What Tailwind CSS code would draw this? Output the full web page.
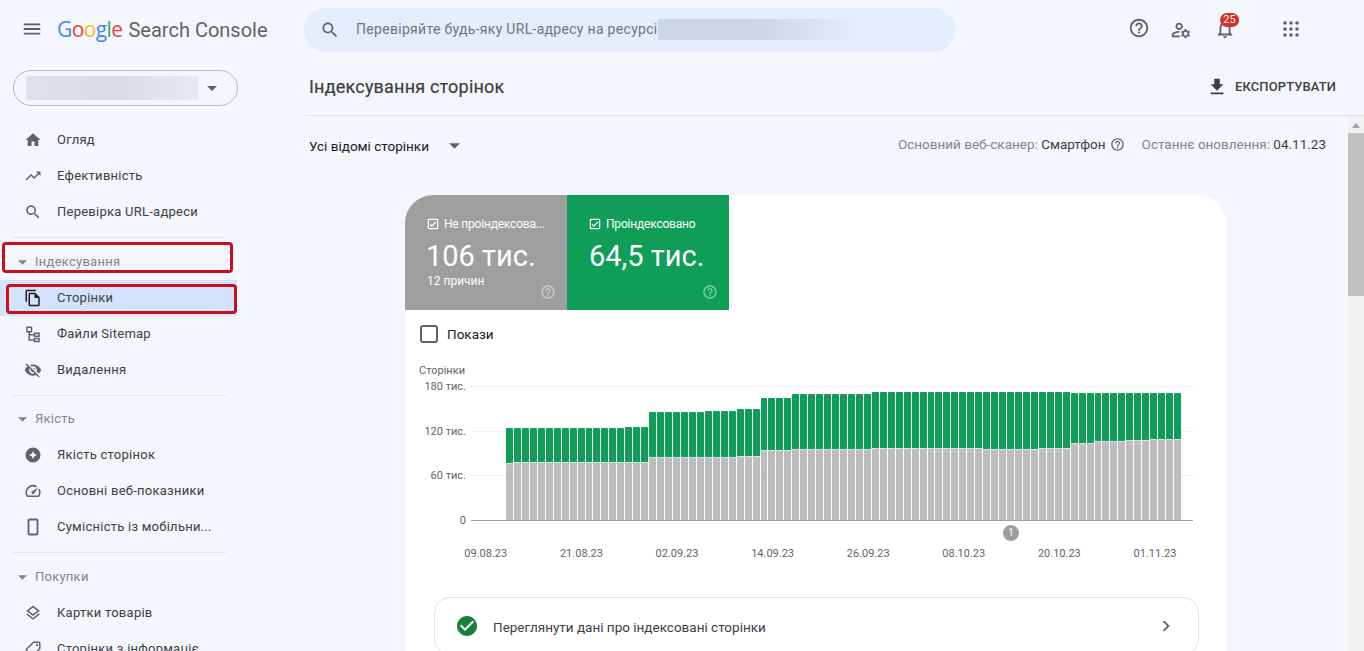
<!DOCTYPE html>
<html lang="uk">
<head>
  <meta charset="UTF-8" />
  <meta name="viewport" content="width=device-width, initial-scale=1.0" />
  <title>Індексування сторінок</title>
  <script src="https://cdn.jsdelivr.net/npm/@tailwindcss/browser@4"></script>
</head>
<body class="bg-[#f3f6fc] h-screen overflow-hidden font-['Roboto',sans-serif] text-[#3c4043]">

  <!-- header -->
  <header class="flex items-center h-[58px]">
    <div class="w-[304px] shrink-0 flex items-center">
      <svg class="ml-[21px] w-[22px] h-[22px] fill-[#5f6368]" viewBox="0 0 24 24"><path d="M3 18h18v-2H3v2zm0-5h18v-2H3v2zm0-7v2h18V6H3z"/></svg>
      <div class="ml-[14px] mt-[2px] flex items-baseline whitespace-nowrap">
        <span class="text-[21px] leading-[28px] font-['Open_Sans',sans-serif] tracking-[-0.6px]"><span class="text-[#4285f4]">G</span><span class="text-[#ea4335]">o</span><span class="text-[#fbbc05]">o</span><span class="text-[#4285f4]">g</span><span class="text-[#34a853]">l</span><span class="text-[#ea4335]">e</span></span>
        <span class="ml-[6px] text-[20px] text-[#5f6368]">Search Console</span>
      </div>
    </div>
    <div class="w-[651px] h-[44px] mt-[1px] rounded-full bg-[#e3edfb] flex items-center">
      <svg class="ml-[16px] w-5 h-5 fill-[#5f6368]" viewBox="0 0 24 24"><path d="M15.5 14h-.79l-.28-.27C15.41 12.59 16 11.11 16 9.5 16 5.91 13.09 3 9.5 3S3 5.91 3 9.5 5.91 16 9.5 16c1.61 0 3.09-.59 4.23-1.57l.27.28v.79l5 4.99L20.49 19l-4.99-5zm-6 0C7.01 14 5 11.99 5 9.5S7.01 5 9.5 5 14 7.01 14 9.5 11.99 14 9.5 14z"/></svg>
      <span class="ml-[16px] text-[14px] tracking-[0.3px] text-[#70757a] whitespace-nowrap">Перевіряйте будь-яку URL-адресу на ресурсі</span>
      <div class="w-[200px] h-[21px] bg-gradient-to-r from-[#cdd6e5] via-[#ccd6e6] to-[#e3edfb]"></div>
    </div>
    <div class="flex-1 relative flex items-center h-full">
      <svg class="absolute left-[173px] top-[17px] w-[22px] h-[22px] fill-[#5f6368]" viewBox="0 0 24 24"><path d="M11 18h2v-2h-2v2zm1-16C6.48 2 2 6.48 2 12s4.48 10 10 10 10-4.48 10-10S17.52 2 12 2zm0 18c-4.41 0-8-3.59-8-8s3.59-8 8-8 8 3.59 8 8-3.59 8-8 8zm0-14c-2.21 0-4 1.79-4 4h2c0-1.1.9-2 2-2s2 .9 2 2c0 2-3 1.75-3 5h2c0-2.25 3-2.5 3-5 0-2.21-1.79-4-4-4z"/></svg>
      <svg class="absolute left-[215px] top-[19px] w-[22px] h-[22px] fill-[#5f6368]" viewBox="0 0 24 24"><path d="M4 18v-.65c0-.34.16-.66.41-.81C6.1 15.53 8.03 15 10 15c.03 0 .05 0 .08.01.1-.7.3-1.37.59-1.98-.22-.02-.44-.03-.67-.03-2.42 0-4.68.67-6.61 1.82-.88.52-1.39 1.5-1.39 2.53V20h9.26c-.42-.6-.75-1.28-.97-2H4zM10 12c2.21 0 4-1.79 4-4s-1.79-4-4-4-4 1.79-4 4 1.79 4 4 4zm0-6c1.1 0 2 .9 2 2s-.9 2-2 2-2-.9-2-2 .9-2 2-2zM20.75 16c0-.22-.03-.42-.06-.63l1.14-1.01-1-1.73-1.45.49c-.32-.27-.68-.48-1.08-.63L18 11h-2l-.3 1.49c-.4.15-.76.36-1.08.63l-1.45-.49-1 1.73 1.14 1.01c-.03.21-.06.41-.06.63s.03.42.06.63l-1.14 1.01 1 1.73 1.45-.49c.32.27.68.48 1.08.63L16 21h2l.3-1.49c.4-.15.76-.36 1.08-.63l1.45.49 1-1.73-1.14-1.01c.03-.21.06-.41.06-.63zM17 18c-1.1 0-2-.9-2-2s.9-2 2-2 2 .9 2 2-.9 2-2 2z"/></svg>
      <svg class="absolute left-[259px] top-[18px] w-[22px] h-[22px] fill-[#5f6368]" viewBox="0 0 24 24"><path d="M12 22c1.1 0 2-.9 2-2h-4c0 1.1.9 2 2 2zm6-6v-5c0-3.07-1.63-5.64-4.5-6.32V4c0-.83-.67-1.5-1.5-1.5s-1.5.67-1.5 1.5v.68C7.64 5.36 6 7.92 6 11v5l-2 2v1h16v-1l-2-2zm-2 1H8v-6c0-2.48 1.51-4.5 4-4.5s4 2.02 4 4.5v6z"/></svg>
      <span class="absolute left-[265px] top-[13px] w-[19px] h-[14px] rounded-full bg-[#d93025] text-white text-[11px] leading-[14px] text-center">25</span>
      <svg class="absolute left-[328px] top-[21px] w-[16px] h-[16px] fill-[#5f6368]" viewBox="0 0 16 16"><circle cx="2" cy="2" r="1.8"/><circle cx="8" cy="2" r="1.8"/><circle cx="14" cy="2" r="1.8"/><circle cx="2" cy="8" r="1.8"/><circle cx="8" cy="8" r="1.8"/><circle cx="14" cy="8" r="1.8"/><circle cx="2" cy="14" r="1.8"/><circle cx="8" cy="14" r="1.8"/><circle cx="14" cy="14" r="1.8"/></svg>
    </div>
  </header>

  <div class="flex h-[593px]">
    <!-- sidebar -->
    <aside class="w-[305px] shrink-0 relative">
      <div class="ml-[13px] mt-[12px] w-[225px] h-[36px] rounded-full border border-[#b4b8bf] flex items-center">
        <div class="ml-[12px] w-[172px] h-[24px] bg-gradient-to-r from-[#dfe2e8] via-[#d8dbe1] to-[#e6e9ef]"></div>
        <svg class="ml-[9px] w-[10px] h-[5px] fill-[#5f6368]" viewBox="0 0 10 5"><path d="M0 0l5 5 5-5z"/></svg>
      </div>

      <nav class="mt-[16px] w-[237px] text-[13px] tracking-[0.25px]">
        <a class="flex items-center h-[36px]">
          <svg class="ml-[24px] w-[18px] h-[18px] fill-[#5f6368]" viewBox="0 0 24 24"><path d="M10 20v-6h4v6h5v-8h3L12 3 2 12h3v8z"/></svg>
          <span class="ml-[15px]">Огляд</span>
        </a>
        <a class="flex items-center h-[36px]">
          <svg class="ml-[24px] w-[18px] h-[18px] fill-[#5f6368]" viewBox="0 0 24 24"><path d="M16 6l2.29 2.29-4.88 4.88-4-4L2 16.59 3.41 18l6-6 4 4 6.3-6.29L22 12V6z"/></svg>
          <span class="ml-[15px]">Ефективність</span>
        </a>
        <a class="flex items-center h-[36px]">
          <svg class="ml-[24px] w-[18px] h-[18px] fill-[#5f6368]" viewBox="0 0 24 24"><path d="M15.5 14h-.79l-.28-.27C15.41 12.59 16 11.11 16 9.5 16 5.91 13.09 3 9.5 3S3 5.91 3 9.5 5.91 16 9.5 16c1.61 0 3.09-.59 4.23-1.57l.27.28v.79l5 4.99L20.49 19l-4.99-5zm-6 0C7.01 14 5 11.99 5 9.5S7.01 5 9.5 5 14 7.01 14 9.5 11.99 14 9.5 14z"/></svg>
          <span class="ml-[15px]">Перевірка URL-адреси</span>
        </a>

        <div class="ml-[13px] mr-[11px] mt-[7px] h-px bg-[#e1e3e6]"></div>
        <div class="flex items-center h-[42px] pt-[6px] text-[#80868b]">
          <svg class="ml-[18px] w-[9px] h-[5px] fill-[#80868b]" viewBox="0 0 10 5"><path d="M0 0l5 5 5-5z"/></svg>
          <span class="ml-[8px]">Індексування</span>
        </div>
        <a class="flex items-center h-[36px] bg-[#d3e3fd]">
          <svg class="ml-[24px] w-[18px] h-[18px] fill-[#1f1f1f]" viewBox="0 0 24 24"><path d="M16 1H4c-1.1 0-2 .9-2 2v14h2V3h12V1zm-1 4H8c-1.1 0-1.99.9-1.99 2L6 21c0 1.1.89 2 1.99 2H19c1.1 0 2-.9 2-2V11l-6-6zM8 21V7h6v5h5v9H8z"/></svg>
          <span class="ml-[15px]">Сторінки</span>
        </a>
        <a class="flex items-center h-[36px]">
          <svg class="ml-[24px] w-[18px] h-[18px] fill-none stroke-[#5f6368] stroke-[2px]" viewBox="0 0 24 24"><path d="M4 3h6v6H4zM14 11h6v4h-6zM14 18h6v4h-6zM7 9v11h7M7 13h7"/></svg>
          <span class="ml-[15px]">Файли Sitemap</span>
        </a>
        <a class="flex items-center h-[36px]">
          <svg class="ml-[24px] w-[18px] h-[18px] fill-[#5f6368]" viewBox="0 0 24 24"><path d="M12 7c2.76 0 5 2.24 5 5 0 .65-.13 1.26-.36 1.83l2.92 2.92c1.51-1.26 2.7-2.89 3.43-4.75-1.73-4.39-6-7.5-11-7.5-1.4 0-2.74.25-3.98.7l2.16 2.16C10.74 7.13 11.35 7 12 7zM2 4.27l2.28 2.28.46.46C3.08 8.3 1.78 10.02 1 12c1.73 4.39 6 7.5 11 7.5 1.55 0 3.03-.3 4.38-.84l.42.42L19.73 22 21 20.73 3.27 3 2 4.27zM7.53 9.8l1.55 1.55c-.05.21-.08.43-.08.65 0 1.66 1.34 3 3 3 .22 0 .44-.03.65-.08l1.55 1.55c-.67.33-1.41.53-2.2.53-2.76 0-5-2.24-5-5 0-.79.2-1.53.53-2.2zm4.31-.78l3.15 3.15.02-.16c0-1.66-1.34-3-3-3l-.17.01z"/></svg>
          <span class="ml-[15px]">Видалення</span>
        </a>

        <div class="ml-[13px] mr-[11px] mt-[7px] h-px bg-[#e1e3e6]"></div>
        <div class="flex items-center h-[41px] pt-[5px] text-[#80868b]">
          <svg class="ml-[18px] w-[9px] h-[5px] fill-[#80868b]" viewBox="0 0 10 5"><path d="M0 0l5 5 5-5z"/></svg>
          <span class="ml-[8px]">Якість</span>
        </div>
        <a class="flex items-center h-[36px]">
          <svg class="ml-[24px] w-[18px] h-[18px] fill-[#5f6368]" viewBox="0 0 24 24"><path fill-rule="evenodd" d="M12 2a10 10 0 1 0 0 20 10 10 0 0 0 0-20zm0 4.5l1.6 3.9 3.9 1.6-3.9 1.6-1.6 3.9-1.6-3.9L6.500 12l3.900-1.600z"/></svg>
          <span class="ml-[15px]">Якість сторінок</span>
        </a>
        <a class="flex items-center h-[36px]">
          <svg class="ml-[24px] w-[18px] h-[18px] fill-[#5f6368]" viewBox="0 0 24 24"><path d="M20.38 8.57l-1.23 1.85a8 8 0 0 1-.22 7.58H5.07A8 8 0 0 1 15.58 6.85l1.85-1.23A10 10 0 0 0 3.35 19a2 2 0 0 0 1.72 1h13.85a2 2 0 0 0 1.74-1 10 10 0 0 0-.27-10.44zm-9.79 6.84a2 2 0 0 0 2.83 0l5.66-8.49-8.49 5.66a2 2 0 0 0 0 2.83z"/></svg>
          <span class="ml-[15px]">Основні веб-показники</span>
        </a>
        <a class="flex items-center h-[36px]">
          <svg class="ml-[24px] w-[18px] h-[18px] fill-none stroke-[#5f6368] stroke-[2.4px]" viewBox="0 0 24 24"><rect x="6" y="2" width="12" height="20" rx="1.500"/></svg>
          <span class="ml-[15px] whitespace-nowrap">Сумісність із мобільни...</span>
        </a>

        <div class="ml-[13px] mr-[11px] mt-[7px] h-px bg-[#e1e3e6]"></div>
        <div class="flex items-center h-[42px] pt-[6px] text-[#80868b]">
          <svg class="ml-[18px] w-[9px] h-[5px] fill-[#80868b]" viewBox="0 0 10 5"><path d="M0 0l5 5 5-5z"/></svg>
          <span class="ml-[8px]">Покупки</span>
        </div>
        <a class="flex items-center h-[36px]">
          <svg class="ml-[24px] w-[18px] h-[18px] fill-[#5f6368]" viewBox="0 0 24 24"><path d="M11.99 18.54l-7.37-5.73L3 14.07l9 7 9-7-1.63-1.27-7.38 5.74zM12 16l7.36-5.73L21 9l-9-7-9 7 1.63 1.27L12 16zm0-11.47L17.74 9 12 13.47 6.26 9 12 4.53z"/></svg>
          <span class="ml-[15px]">Картки товарів</span>
        </a>
        <a class="flex items-center h-[36px]">
          <svg class="ml-[24px] w-[18px] h-[18px] fill-[#5f6368] -scale-x-100" viewBox="0 0 24 24"><path d="M21.41 11.58l-9-9C12.05 2.22 11.55 2 11 2H4c-1.1 0-2 .9-2 2v7c0 .55.22 1.05.59 1.42l9 9c.36.36.86.58 1.41.58s1.05-.22 1.41-.59l7-7c.37-.36.59-.86.59-1.41s-.23-1.06-.59-1.42zM13 20.01L4 11V4h7v-.01l9 9-7 7.02z"/><circle cx="6.500" cy="6.500" r="1.500"/></svg>
          <span class="ml-[15px]">Сторінки з інформаціє</span>
        </a>
      </nav>

      <!-- red highlight boxes -->
      <div class="absolute left-[2px] top-[184px] w-[231px] h-[31px] rounded-[4px] border-[3px] border-[#c8101c]"></div>
      <div class="absolute left-[6px] top-[226px] w-[231px] h-[30px] rounded-[4px] border-[3px] border-[#c8101c]"></div>
    </aside>

    <!-- main -->
    <main class="flex-1 flex flex-col min-w-0">
      <div class="flex items-center justify-between h-[58px] border-b border-[#dfe1e5] pl-[4px] pr-[28px] shrink-0">
        <h1 class="text-[18px] font-normal tracking-[0.2px] text-[#3c4043] [-webkit-text-stroke:0.2px]">Індексування сторінок</h1>
        <div class="flex items-center gap-[7px]">
          <svg class="w-[22px] h-[22px] fill-[#3c4043]" viewBox="0 0 24 24"><path d="M19 9h-4V3H9v6H5l7 7 7-7zM5 18v2h14v-2H5z"/></svg>
          <span class="text-[13px] font-medium tracking-[0.1px]">ЕКСПОРТУВАТИ</span>
        </div>
      </div>

      <div class="flex flex-1 min-h-0">
        <div class="flex-1 min-w-0 overflow-hidden">
          <div class="flex items-center h-[60px] pl-[4px] pr-[22px]">
            <span class="text-[13.500px] text-[#202124]">Усі відомі сторінки</span>
            <svg class="ml-[20px] w-[11px] h-[6px] fill-[#5f6368]" viewBox="0 0 10 5"><path d="M0 0l5 5 5-5z"/></svg>
            <div class="ml-auto flex items-center text-[13.500px] -mt-[3px] whitespace-nowrap text-[#80868b]">
              <span>Основний веб-сканер:&nbsp;</span><span class="text-[#3c4043]">Смартфон</span>
              <svg class="ml-[4px] w-[15px] h-[15px] fill-[#5f6368]" viewBox="0 0 24 24"><path d="M11 18h2v-2h-2v2zm1-16C6.48 2 2 6.48 2 12s4.48 10 10 10 10-4.48 10-10S17.52 2 12 2zm0 18c-4.41 0-8-3.59-8-8s3.59-8 8-8 8 3.59 8 8-3.59 8-8 8zm0-14c-2.21 0-4 1.79-4 4h2c0-1.1.9-2 2-2s2 .9 2 2c0 2-3 1.75-3 5h2c0-2.25 3-2.5 3-5 0-2.21-1.79-4-4-4z"/></svg>
              <span class="ml-[17px]">Останнє оновлення:&nbsp;</span><span class="text-[#3c4043]">04.11.23</span>
            </div>
          </div>

          <!-- card -->
          <section class="ml-[100px] mt-[19px] w-[821px] h-[500px] bg-white rounded-t-[28px]">
            <div class="flex h-[115px] text-white">
              <div class="w-[162px] bg-[#9e9e9e] rounded-tl-[28px] relative pl-[22px] pt-[20px]">
                <div class="flex items-center h-[18px]">
                  <svg class="w-[14px] h-[14px] -ml-[1px] fill-white" viewBox="0 0 24 24"><path d="M19 3H5c-1.100 0-2 .9-2 2v14c0 1.100.9 2 2 2h14c1.100 0 2-.9 2-2V5c0-1.100-.9-2-2-2zm0 16H5V5h14v14zM17.990 9l-1.410-1.420-6.590 6.590-2.580-2.570-1.420 1.410 4 3.990z"/></svg>
                  <span class="ml-[4px] text-[12px] tracking-[-0.2px] whitespace-nowrap">Не проіндексова...</span>
                </div>
                <div class="text-[29px] leading-[36px] mt-[5px] -ml-[1px]">106 тис.</div>
                <div class="text-[12px] leading-[14px]">12 причин</div>
                <svg class="absolute right-[11px] bottom-[10px] w-[16px] h-[16px] fill-white/50" viewBox="0 0 24 24"><path d="M11 18h2v-2h-2v2zm1-16C6.48 2 2 6.48 2 12s4.48 10 10 10 10-4.48 10-10S17.52 2 12 2zm0 18c-4.41 0-8-3.59-8-8s3.59-8 8-8 8 3.59 8 8-3.59 8-8 8zm0-14c-2.21 0-4 1.79-4 4h2c0-1.1.9-2 2-2s2 .9 2 2c0 2-3 1.75-3 5h2c0-2.25 3-2.5 3-5 0-2.21-1.79-4-4-4z"/></svg>
              </div>
              <div class="w-[162px] bg-[#0f9d58] relative pl-[22px] pt-[20px]">
                <div class="flex items-center h-[18px]">
                  <svg class="w-[14px] h-[14px] -ml-[1px] fill-white" viewBox="0 0 24 24"><path d="M19 3H5c-1.100 0-2 .9-2 2v14c0 1.100.9 2 2 2h14c1.100 0 2-.9 2-2V5c0-1.100-.9-2-2-2zm0 16H5V5h14v14zM17.990 9l-1.410-1.420-6.590 6.590-2.580-2.570-1.420 1.410 4 3.990z"/></svg>
                  <span class="ml-[4px] text-[12px] tracking-[-0.2px]">Проіндексовано</span>
                </div>
                <div class="text-[29px] leading-[36px] mt-[5px]">64,5 тис.</div>
                <svg class="absolute right-[11px] bottom-[10px] w-[16px] h-[16px] fill-white/50" viewBox="0 0 24 24"><path d="M11 18h2v-2h-2v2zm1-16C6.48 2 2 6.48 2 12s4.48 10 10 10 10-4.48 10-10S17.52 2 12 2zm0 18c-4.41 0-8-3.59-8-8s3.59-8 8-8 8 3.59 8 8-3.59 8-8 8zm0-14c-2.21 0-4 1.79-4 4h2c0-1.1.9-2 2-2s2 .9 2 2c0 2-3 1.75-3 5h2c0-2.25 3-2.5 3-5 0-2.21-1.79-4-4-4z"/></svg>
              </div>
            </div>

            <div class="flex items-center h-[48px] pl-[15px]">
              <div class="w-[18px] h-[18px] rounded-[3px] border-2 border-[#5f6368]"></div>
              <span class="ml-[9px] text-[13.500px] text-[#202124]">Покази</span>
            </div>

            <!-- chart -->
            <div class="text-[11px] leading-[14px] text-[#5f6368]">
              <div class="pl-[14px] pt-[6px] pb-[8px]">Сторінки</div>
              <div class="flex h-[135px]">
                <div class="w-[61px] h-[148px] -mt-[6px] flex flex-col justify-between text-right shrink-0">
                  <span>180 тис.</span><span>120 тис.</span><span>60 тис.</span><span>0</span>
                </div>
                <div class="relative ml-[5px] w-[722px] h-full border-b border-[#9aa0a6]">
                  <div class="absolute left-0 right-0 top-0 h-px bg-[#eeeeee]"></div>
                  <div class="absolute left-0 right-0 top-[45px] h-px bg-[#eeeeee]"></div>
                  <div class="absolute left-0 right-0 top-[89px] h-px bg-[#eeeeee]"></div>
                  <div id="bars" class="absolute left-[35px] bottom-0 w-[676px] h-full flex items-end"></div>
                  <div class="absolute left-[532px] top-[139px] w-4 h-4 rounded-full bg-[#9e9e9e] text-white text-[10px] leading-4 text-center">1</div>
                </div>
              </div>
              <div class="flex ml-[33px] mt-[26px]">
                <span class="w-[95.600px] text-center">09.08.23</span>
                <span class="w-[95.600px] text-center">21.08.23</span>
                <span class="w-[95.600px] text-center">02.09.23</span>
                <span class="w-[95.600px] text-center">14.09.23</span>
                <span class="w-[95.600px] text-center">26.09.23</span>
                <span class="w-[95.600px] text-center">08.10.23</span>
                <span class="w-[95.600px] text-center">20.10.23</span>
                <span class="w-[95.600px] text-center">01.11.23</span>
              </div>
            </div>

            <div class="ml-[29px] mt-[36px] w-[765px] h-[58px] rounded-[16px] border border-[#e0e2e5] flex items-center">
              <svg class="ml-[20px] w-[24px] h-[24px] fill-[#188038]" viewBox="0 0 24 24"><path d="M12 2C6.480 2 2 6.480 2 12s4.480 10 10 10 10-4.480 10-10S17.520 2 12 2zm-2 15l-5-5 1.410-1.410L10 14.170l7.590-7.590L19 8l-9 9z"/></svg>
              <span class="ml-[14px] mt-[2px] text-[13.500px] text-[#3c4043]">Переглянути дані про індексовані сторінки</span>
              <svg class="ml-auto mr-[21px] w-[22px] h-[22px] fill-[#5f6368]" viewBox="0 0 24 24"><path d="M10 6L8.590 7.410 13.170 12l-4.580 4.590L10 18l6-6z"/></svg>
            </div>
          </section>
        </div>

        <!-- scrollbar -->
        <div class="w-4 shrink-0 bg-[#f1f1f1] flex flex-col items-center">
          <svg class="mt-[7px] w-[8px] h-[5px] fill-[#a3a3a3]" viewBox="0 0 8 5"><path d="M4 0l4 5H0z"/></svg>
          <div class="mt-[5px] w-full h-[163px] bg-[#c1c1c1]"></div>
        </div>
      </div>
    </main>
  </div>

  <script>
    // [кількість барів, всього, сірі] у пікселях від базової лінії
    const segments = [
      [1, 92, 56], [14, 92, 57], [3, 93, 57], [7, 108, 62], [4, 109, 62], [3, 111, 63],
      [4, 122, 69], [10, 126, 70], [14, 128, 71], [7, 128, 70], [4, 128, 71],
      [3, 127, 76], [4, 127, 78], [3, 127, 79], [4, 127, 80]
    ];
    const bars = document.getElementById('bars');
    segments.forEach(([count, total, gray]) => {
      for (let i = 0; i < count; i++) {
        const bar = document.createElement('div');
        bar.className = 'flex-1 flex flex-col pr-[1px]';
        const green = document.createElement('div');
        green.className = 'bg-[#0f9d58] rounded-t-[1px] border-b border-white/80';
        green.style.height = (total - gray) + 'px';
        const rest = document.createElement('div');
        rest.className = 'bg-[#bdbdbd]';
        rest.style.height = gray + 'px';
        bar.append(green, rest);
        bars.append(bar);
      }
    });
  </script>
</body>
</html>
